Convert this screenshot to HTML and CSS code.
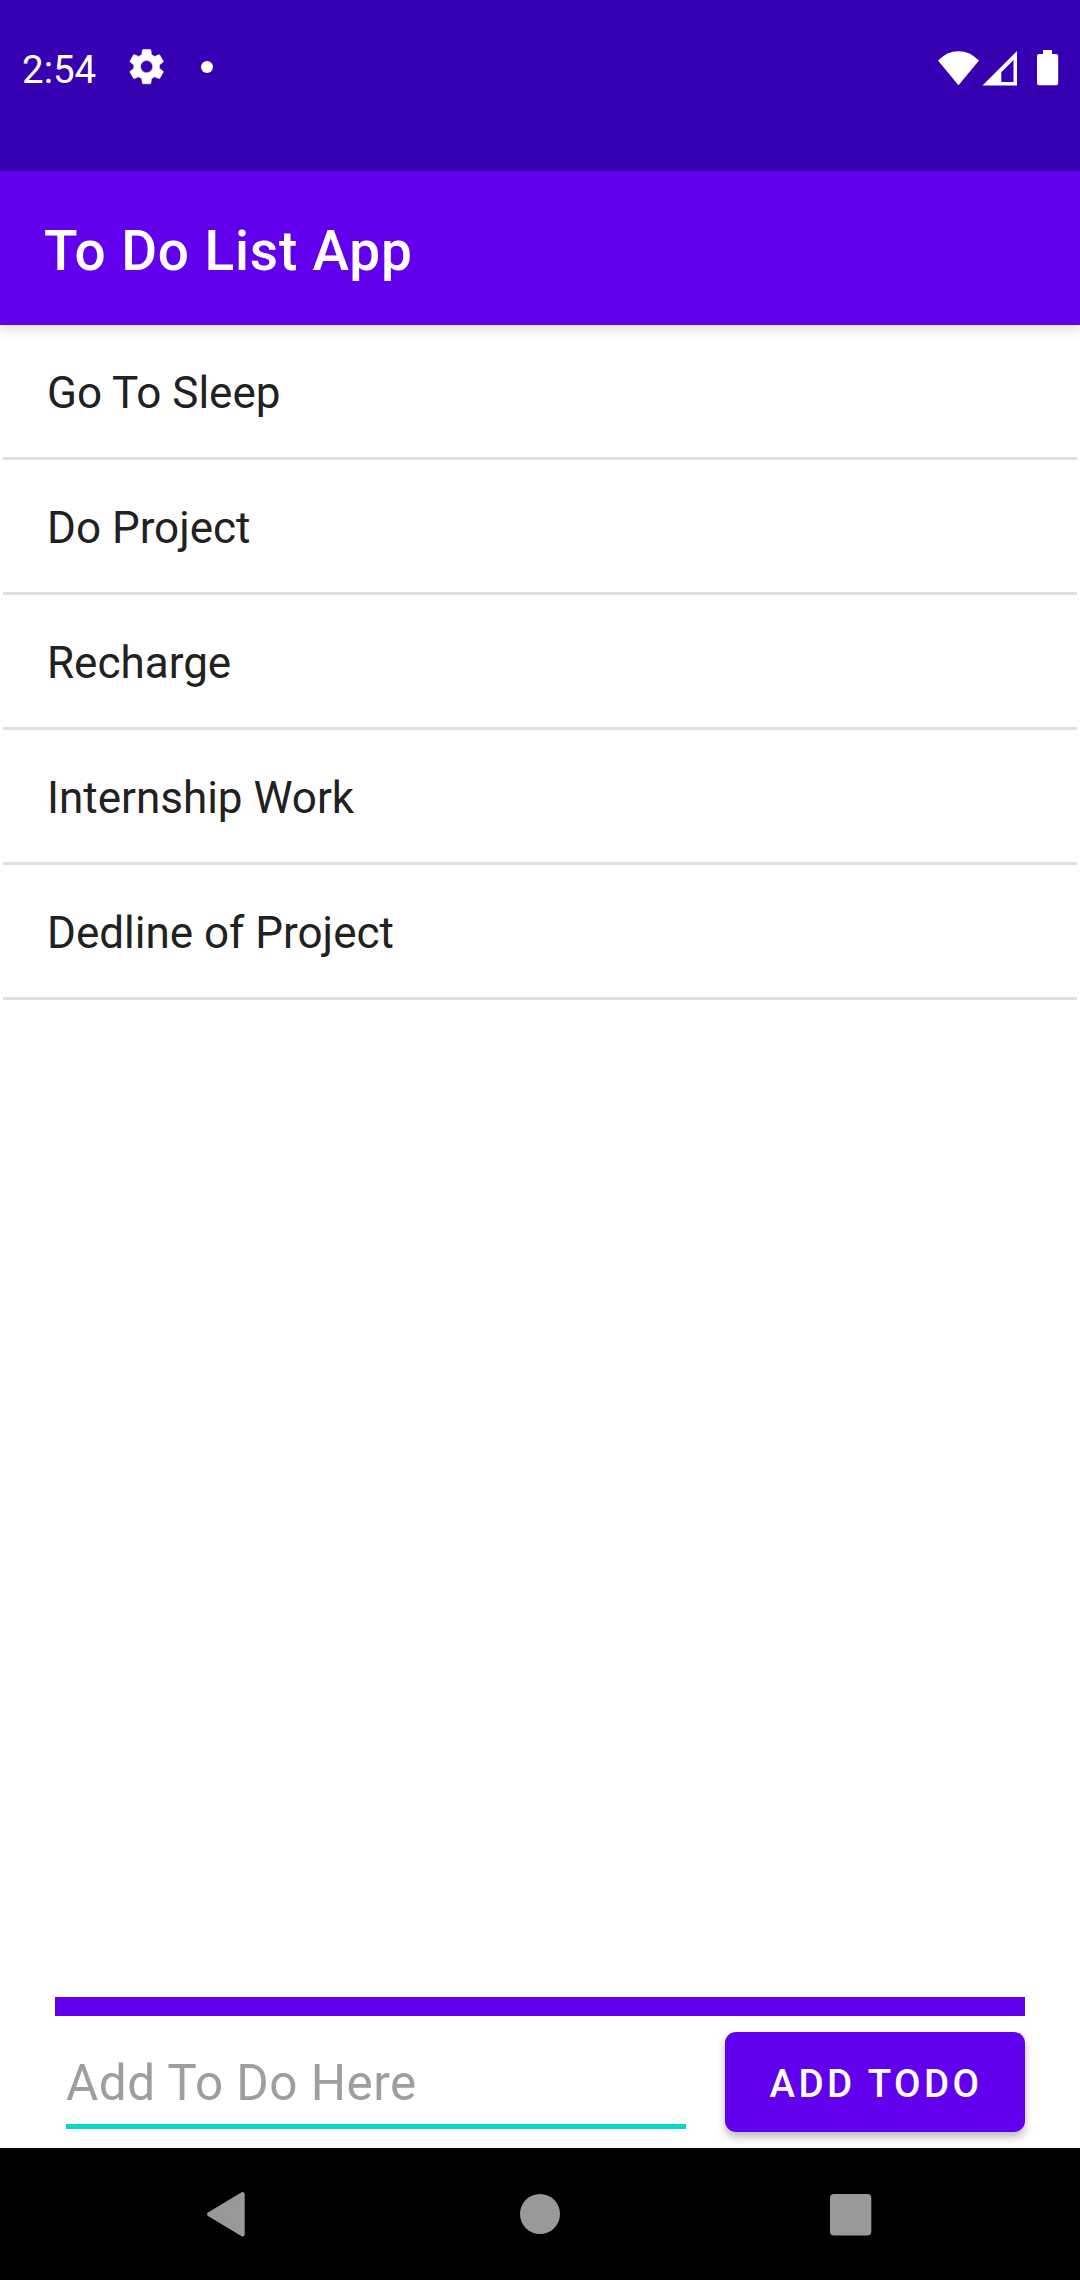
FILE: index.html
```html
<!DOCTYPE html>
<html lang="en">
<head>
<meta charset="utf-8">
<title>To Do List App</title>
<link rel="stylesheet" href="styles.css">
</head>
<body>
<div class="screen">
  <div class="status-bar">
    <span class="clock">2:54</span>
    <svg class="icon-gear" viewBox="0 0 24 24"><path d="M19.43 12.98c.04-.32.07-.64.07-.98s-.03-.66-.07-.98l2.11-1.65c.19-.15.24-.42.12-.64l-2-3.46c-.12-.22-.39-.3-.61-.22l-2.49 1c-.52-.4-1.08-.73-1.69-.98l-.38-2.65C14.46 2.18 14.25 2 14 2h-4c-.25 0-.46.18-.49.42l-.38 2.65c-.61.25-1.17.59-1.69.98l-2.49-1c-.23-.09-.49 0-.61.22l-2 3.46c-.13.22-.07.49.12.64l2.11 1.65c-.04.32-.07.65-.07.98s.03.66.07.98l-2.11 1.65c-.19.15-.24.42-.12.64l2 3.46c.12.22.39.3.61.22l2.49-1c.52.4 1.08.73 1.69.98l.38 2.65c.03.24.24.42.49.42h4c.25 0 .46-.18.49-.42l.38-2.65c.61-.25 1.17-.59 1.69-.98l2.49 1c.23.09.49 0 .61-.22l2-3.46c.12-.22.07-.49-.12-.64l-2.11-1.65zM12 15.5c-1.93 0-3.5-1.57-3.5-3.5s1.57-3.5 3.5-3.5 3.5 1.57 3.5 3.5-1.57 3.5-3.5 3.5z"/></svg>
    <span class="dot"></span>
    <svg class="icon-system" viewBox="0 0 122 36">
      <path d="M20.500 35.200L0 10.500Q9 1.200 20.500 1.200T41 10.500Z"/>
      <path fill-rule="evenodd" d="M44.500 35.500L79 1V35.500ZM63.300 22.200V32H75.500V10Z"/>
      <path d="M105 0h9v4h4.200q2 0 2 2v27.300q0 2-2 2h-17.200q-2 0-2-2V6q0-2 2-2h4Z"/>
    </svg>
  </div>
  <header class="app-bar"><h1 class="title">To Do List App</h1></header>
  <ul class="todo-list">
    <li class="todo">Go To Sleep</li>
    <li class="todo">Do Project</li>
    <li class="todo">Recharge</li>
    <li class="todo">Internship Work</li>
    <li class="todo">Dedline of Project</li>
  </ul>
  <div class="composer">
    <div class="rule"></div>
    <form class="entry">
      <input class="field" type="text" placeholder="Add To Do Here">
      <button class="add" type="button">ADD TODO</button>
    </form>
  </div>
  <nav class="nav-bar">
    <svg class="nav-icon" viewBox="0 0 48 48"><path d="M40.200 4V44.500L6.500 24.300Z" transform="translate(-.5 0)" stroke-width="4" stroke-linejoin="round" class="back"/></svg>
    <svg class="nav-icon" viewBox="0 0 48 48"><circle cx="24" cy="24" r="20"/></svg>
    <svg class="nav-icon" viewBox="0 0 48 48"><rect x="2" y="4" width="41.300" height="41.500" rx="4"/></svg>
  </nav>
</div>
</body>
</html>
```
FILE: styles.css
```css
* { box-sizing: border-box; }
body { margin: 0; background: #fff; font-family: Roboto, sans-serif; }
.screen { width: 1080px; height: 2280px; display: flex; flex-direction: column; overflow: hidden; }

.status-bar { height: 171px; flex: none; background: #3700b3; color: #fff; display: flex; align-items: flex-start; padding: 46px 20px 0 22px; }
.clock { font-size: 38.5px; line-height: 48px; width: 104px; }
.status-bar svg { fill: #fff; }
.icon-gear { width: 41.25px; height: 41.25px; stroke: #fff; stroke-width: .3; }
.dot { width: 12px; height: 12px; border-radius: 50%; background: #fff; margin: 15px 0 0 34px; }
.icon-system { width: 122px; height: 36px; margin: 4px 0 0 auto; }

.app-bar { height: 154px; flex: none; background: #6200ee; color: #fff; display: flex; align-items: center; padding: 6px 0 0 44px; box-shadow: 0 4px 11px rgba(0, 0, 0, .15); }
.title { margin: 0; font-size: 55px; line-height: 64px; font-weight: 500; letter-spacing: .015em; }

.todo-list { list-style: none; margin: 0; padding: 0 3px; flex: 1; }
.todo { height: 135px; border-bottom: 3px solid #e0e0e0; padding-left: 44px; font-size: 44px; line-height: 136px; color: #212121; }

.composer { flex: none; height: 151px; padding: 0 55px; }
.rule { height: 19px; background: #6200ee; }
.entry { display: flex; justify-content: space-between; padding: 16px 0 0 11px; }
.field { width: 620px; height: 97px; padding: 10px 0 0; border: 0; border-bottom: 5px solid #03dac5; outline: 0; background: none; font: 49.5px/58px Roboto, sans-serif; letter-spacing: .009375em; }
.field::placeholder { color: #9e9e9e; opacity: 1; }
.add { width: 300px; height: 100px; padding: 4px 0 0 2px; border: 0; border-radius: 11px; background: #6200ee; color: #fff; font: 500 38.5px/46px Roboto, sans-serif; letter-spacing: .0893em; box-shadow: 0 5px 8px rgba(0, 0, 0, .28); }

.nav-bar { height: 132px; flex: none; background: #000; display: flex; justify-content: space-between; padding: 42px 204px 0 203px; position: relative; }
.nav-icon { width: 48px; height: 48px; fill: #999; }
.back { stroke: #999; }
```
